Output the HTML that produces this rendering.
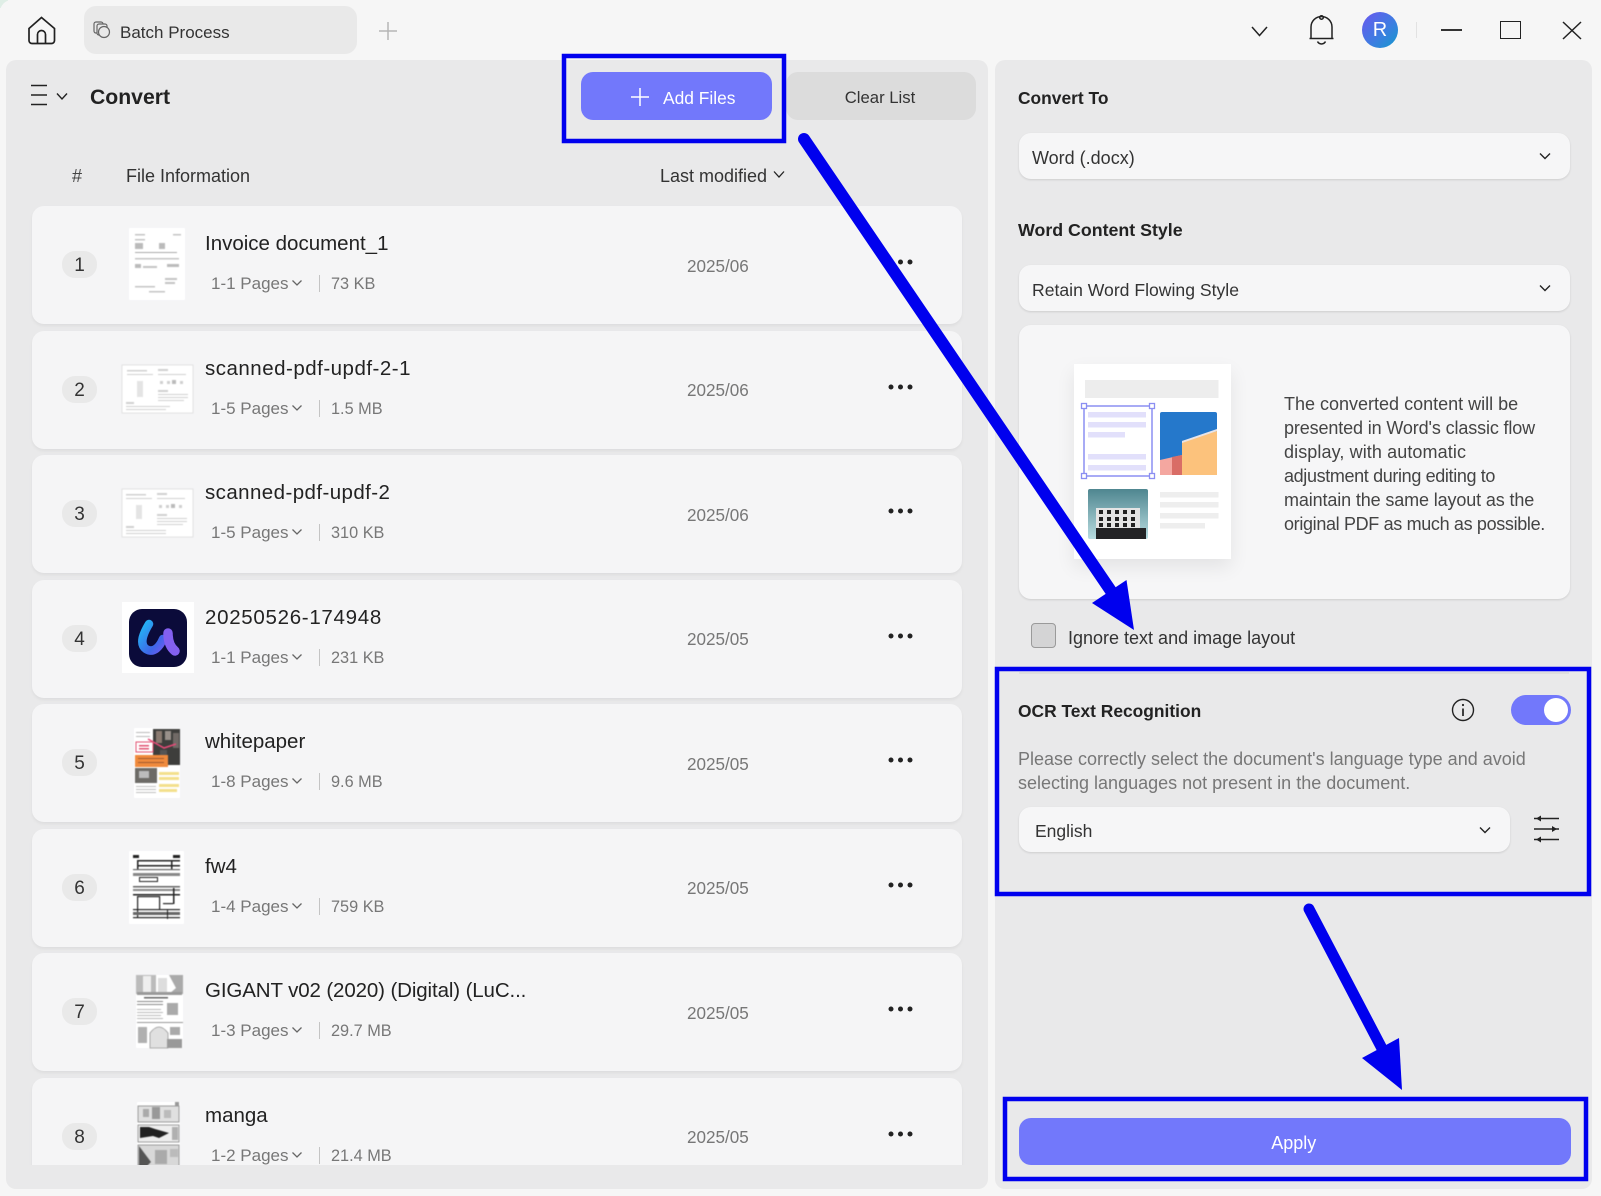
<!DOCTYPE html>
<html>
<head>
<meta charset="utf-8">
<style>
html,body{margin:0;padding:0;}
body{width:1601px;height:1196px;overflow:hidden;background:#f6f6f6;position:relative;font-family:"Liberation Sans",sans-serif;color:#222;}
.a{position:absolute;}
.t{position:absolute;white-space:nowrap;line-height:24px;height:24px;}
.panel{position:absolute;background:#e9e9ea;border-radius:10px;top:60px;height:1129px;}
.dd{position:absolute;background:#f6f6f7;border-radius:12px;box-shadow:0 1px 2px rgba(0,0,0,.12);}
.list{position:absolute;left:0;top:0;width:986px;height:1165px;overflow:hidden;}
.row{position:absolute;left:32px;width:930px;height:118px;background:#f5f5f6;border-radius:12px;box-shadow:0 2px 3px rgba(0,0,0,.05);}
.badge{position:absolute;left:30px;top:45px;width:35px;height:27px;border-radius:13px;background:#e9e9e9;text-align:center;font-size:19px;line-height:29px;color:#333;}
.title{position:absolute;left:173px;top:25px;font-size:20.5px;line-height:26px;color:#222;white-space:nowrap;}
.sub{position:absolute;left:179px;top:66px;font-size:17px;line-height:24px;color:#777;white-space:nowrap;}
.sep{position:absolute;left:287px;top:69px;width:1px;height:17px;background:#c4c4c4;}
.size{position:absolute;left:299px;top:66px;font-size:16.300px;line-height:24px;color:#777;white-space:nowrap;}
.date{position:absolute;left:655px;top:48.500px;font-size:17.100px;line-height:24px;color:#777;}
.chev{position:absolute;left:259px;top:73px;}
.dots{position:absolute;left:856px;top:53px;}
.th{filter:blur(.45px);}
svg{display:block;overflow:visible;}
</style>
</head>
<body>

<!-- window corner -->
<div class="a" style="left:0;top:0;width:8px;height:8px;background:#dfeee6;"></div>
<div class="a" style="left:0;top:0;width:16px;height:16px;background:#f6f6f6;border-radius:12px 0 0 0;"></div>

<!-- top bar -->
<svg class="a" style="left:26px;top:15px" width="32" height="30" viewBox="0 0 32 30" fill="none" stroke="#222" stroke-width="1.700">
<path d="M3 13.500 15.500 2.500 28.500 13.500V25.500A3 3 0 0 1 25.500 28.500H6A3 3 0 0 1 3 25.500Z"/>
<path d="M11.500 28.500V19.500A4 4 0 0 1 19.500 19.500V28.500"/>
</svg>
<div class="a" style="left:84px;top:6px;width:273px;height:48px;background:#e9e9e9;border-radius:12px;"></div>
<svg class="a" style="left:93px;top:21px" width="20" height="18" viewBox="0 0 20 18" fill="none" stroke="#666" stroke-width="1.200">
<rect x="1" y="1" width="9" height="11" rx="2"/><rect x="4" y="3" width="10" height="11" rx="2" fill="#e9e9e9"/><circle cx="11" cy="11" r="5.500" fill="#e9e9e9"/>
</svg>
<div class="t" style="left:120px;top:20.500px;font-size:17px;color:#333;">Batch Process</div>
<svg class="a" style="left:378px;top:21px" width="20" height="20" fill="none" stroke="#b5b5b5" stroke-width="1.500"><path d="M10 1V19M1 10H19"/></svg>

<svg class="a" style="left:1251px;top:25px" width="17" height="12" fill="none" stroke="#222" stroke-width="1.500"><path d="M1 2 8.500 10.500 16 2"/></svg>
<svg class="a" style="left:1308px;top:15px" width="27" height="30" viewBox="0 0 27 30" fill="none" stroke="#222" stroke-width="1.500">
<path d="M3 23V12A10.500 10.500 0 0 1 24 12V23"/><path d="M1.500 23.500H25.500"/><path d="M9.500 26.500A4.500 4.500 0 0 0 17.500 26.500"/><circle cx="13.500" cy="2.500" r="1.800"/>
</svg>
<div class="a" style="left:1362px;top:12px;width:36px;height:36px;border-radius:50%;background:linear-gradient(135deg,#6b57f0,#3a7fe0 60%,#1498cc);color:#fff;text-align:center;font-size:20px;line-height:36px;">R</div>
<div class="a" style="left:1416px;top:22px;width:1px;height:16px;background:#e2e2e2;"></div>
<div class="a" style="left:1441px;top:28.500px;width:21px;height:2px;background:#333;"></div>
<div class="a" style="left:1500px;top:21px;width:19px;height:16px;border:1.700px solid #222;"></div>
<svg class="a" style="left:1562px;top:21px" width="20" height="19" fill="none" stroke="#222" stroke-width="1.500"><path d="M1 1 19 18M19 1 1 18"/></svg>

<!-- left panel -->
<div class="panel" style="left:6px;width:982px;"></div>
<svg class="a" style="left:31px;top:84px" width="17" height="22" fill="none" stroke="#222" stroke-width="1.500"><path d="M0 1.500H16M0 11H16M0 20.500H16"/></svg>
<svg class="a" style="left:56px;top:92px" width="12" height="9" fill="none" stroke="#222" stroke-width="1.400"><path d="M1 1.500 6 7 11 1.500"/></svg>
<div class="t" style="left:90px;top:86px;font-size:21.200px;font-weight:bold;color:#222;">Convert</div>

<div class="a" style="left:581px;top:72px;width:191px;height:48px;border-radius:12px;background:#7278fb;"></div>
<svg class="a" style="left:631px;top:88px" width="18" height="18" fill="none" stroke="#fff" stroke-width="1.500"><path d="M9 0V18M0 9H18"/></svg>
<div class="t" style="left:663px;top:86px;font-size:17.400px;color:#fff;">Add Files</div>
<div class="a" style="left:786px;top:72px;width:190px;height:48px;border-radius:12px;background:#dcdcdc;"></div>
<div class="t" style="left:785px;width:190px;text-align:center;top:86px;font-size:16.700px;color:#333;">Clear List</div>

<div class="t" style="left:72px;top:164px;font-size:18px;color:#444;">#</div>
<div class="t" style="left:126px;top:164px;font-size:18px;color:#333;">File Information</div>
<div class="t" style="left:660px;top:164px;font-size:18px;color:#333;">Last modified</div>
<svg class="a" style="left:773px;top:170px" width="12" height="9" fill="none" stroke="#222" stroke-width="1.300"><path d="M1 1.500 6 7 11 1.500"/></svg>

<div class="list">
<!-- row 1 -->
<div class="row" style="top:206px">
<div class="badge">1</div>
<svg class="a th" style="left:97px;top:22px" width="56" height="72" viewBox="0 0 56 72"><rect width="56" height="72" fill="#fff"/><g fill="#c4c4c4"><rect x="6" y="6" width="10" height="1.500"/><rect x="44" y="6" width="8" height="1.500"/><rect x="6" y="11" width="10" height="1.500"/><rect x="6" y="15" width="8" height="6" fill="#bbb"/><rect x="30" y="15" width="6" height="6" fill="#bbb"/><rect x="6" y="24" width="42" height="1" fill="#aaa"/><rect x="6" y="30" width="44" height="1.500"/><rect x="6" y="36" width="6" height="4" fill="#bbb"/><rect x="14" y="38" width="14" height="2"/><rect x="38" y="36" width="12" height="3" fill="#bbb"/><rect x="36" y="50" width="12" height="2"/><rect x="36" y="54" width="10" height="2"/><rect x="6" y="58" width="20" height="1.500"/><rect x="20" y="63" width="16" height="1.500"/></g></svg>
<div class="title">Invoice document_1</div>
<div class="sub">1-1 Pages</div><svg class="chev" width="12" height="8" fill="none" stroke="#666" stroke-width="1.300"><path d="M1.500 1.500 6 6 10.500 1.500"/></svg><div class="sep"></div><div class="size">73 KB</div>
<div class="date">2025/06</div>
<svg class="dots" width="26" height="6" fill="#222"><circle cx="3" cy="3" r="2.500"/><circle cx="12.500" cy="3" r="2.500"/><circle cx="22" cy="3" r="2.500"/></svg>
</div>
<!-- row 2 -->
<div class="row" style="top:330.500px">
<div class="badge">2</div>
<svg class="a th" style="left:90px;top:34px" width="71" height="48" viewBox="0 0 71 48"><rect width="71" height="48" fill="#fff" stroke="#e2e2e2"/><g fill="#d0d0d0"><rect x="5" y="5" width="20" height="1.500"/><rect x="5" y="9" width="26" height="1"/><rect x="36" y="4" width="10" height="2"/><rect x="36" y="9" width="28" height="1"/><rect x="38" y="16" width="3" height="3"/><rect x="45" y="16" width="3" height="3"/><rect x="50" y="15" width="4" height="4" fill="#bbb"/><rect x="58" y="16" width="3" height="3"/><rect x="36" y="25" width="10" height="2"/><rect x="36" y="29" width="30" height="1"/><rect x="36" y="32" width="30" height="1"/><rect x="36" y="35" width="26" height="1"/><rect x="15" y="16" width="6" height="16" fill="#e4e4e4"/><rect x="4" y="37" width="8" height="2"/><rect x="4" y="41" width="44" height="1"/><rect x="4" y="44" width="40" height="1"/></g></svg>
<div class="title" style="letter-spacing:.5px">scanned-pdf-updf-2-1</div>
<div class="sub">1-5 Pages</div><svg class="chev" width="12" height="8" fill="none" stroke="#666" stroke-width="1.300"><path d="M1.500 1.500 6 6 10.500 1.500"/></svg><div class="sep"></div><div class="size">1.5 MB</div>
<div class="date">2025/06</div>
<svg class="dots" width="26" height="6" fill="#222"><circle cx="3" cy="3" r="2.500"/><circle cx="12.500" cy="3" r="2.500"/><circle cx="22" cy="3" r="2.500"/></svg>
</div>
<!-- row 3 -->
<div class="row" style="top:455px">
<div class="badge">3</div>
<svg class="a th" style="left:90px;top:34px" width="71" height="48" viewBox="0 0 71 48"><rect width="71" height="48" fill="#fff" stroke="#e2e2e2"/><g fill="#d0d0d0"><rect x="4" y="5" width="20" height="1.500"/><rect x="4" y="9" width="26" height="1"/><rect x="35" y="4" width="10" height="2"/><rect x="35" y="9" width="28" height="1"/><rect x="37" y="16" width="3" height="3"/><rect x="44" y="16" width="3" height="3"/><rect x="49" y="15" width="4" height="4" fill="#bbb"/><rect x="57" y="16" width="3" height="3"/><rect x="35" y="25" width="10" height="2"/><rect x="35" y="29" width="30" height="1"/><rect x="35" y="32" width="30" height="1"/><rect x="35" y="35" width="26" height="1"/><rect x="14" y="16" width="6" height="14" fill="#e4e4e4"/><rect x="4" y="37" width="8" height="2"/><rect x="4" y="41" width="40" height="1"/><rect x="4" y="44" width="40" height="1"/></g></svg>
<div class="title" style="letter-spacing:.42px">scanned-pdf-updf-2</div>
<div class="sub">1-5 Pages</div><svg class="chev" width="12" height="8" fill="none" stroke="#666" stroke-width="1.300"><path d="M1.500 1.500 6 6 10.500 1.500"/></svg><div class="sep"></div><div class="size">310 KB</div>
<div class="date">2025/06</div>
<svg class="dots" width="26" height="6" fill="#222"><circle cx="3" cy="3" r="2.500"/><circle cx="12.500" cy="3" r="2.500"/><circle cx="22" cy="3" r="2.500"/></svg>
</div>
<!-- row 4 -->
<div class="row" style="top:579.500px">
<div class="badge">4</div>
<svg class="a" style="left:90px;top:22px" width="72" height="71" viewBox="0 0 72 71">
<defs><linearGradient id="g1" x1="0" y1="0" x2="1" y2="1"><stop offset="0" stop-color="#22b5f5"/><stop offset=".7" stop-color="#3f66e8"/><stop offset="1" stop-color="#6a5cf0"/></linearGradient></defs>
<rect width="72" height="71" fill="#fff"/><rect x="7" y="7" width="58" height="58" rx="13" fill="#0b0b3a"/>
<path d="M27 22C21 32 17 42 24 47C32 52 38 44 41 37" fill="none" stroke="url(#g1)" stroke-width="8.500" stroke-linecap="round"/>
<path d="M46 31C46 39 48 45 53 49" fill="none" stroke="#8360f0" stroke-width="9.500" stroke-linecap="round"/>
</svg>
<div class="title" style="letter-spacing:.7px">20250526-174948</div>
<div class="sub">1-1 Pages</div><svg class="chev" width="12" height="8" fill="none" stroke="#666" stroke-width="1.300"><path d="M1.500 1.500 6 6 10.500 1.500"/></svg><div class="sep"></div><div class="size">231 KB</div>
<div class="date">2025/05</div>
<svg class="dots" width="26" height="6" fill="#222"><circle cx="3" cy="3" r="2.500"/><circle cx="12.500" cy="3" r="2.500"/><circle cx="22" cy="3" r="2.500"/></svg>
</div>
<!-- row 5 -->
<div class="row" style="top:704px">
<div class="badge">5</div>
<svg class="a th" style="left:102px;top:24px" width="46" height="70" viewBox="0 0 46 70"><rect width="46" height="70" fill="#fff"/><rect x="19" y="1" width="27" height="36" fill="#3e3e3c"/><rect x="22" y="3" width="6" height="12" fill="#8a7a70"/><rect x="31" y="3" width="6" height="9" fill="#98908a"/><rect x="39" y="5" width="6" height="15" fill="#706a66"/><rect x="26" y="22" width="7" height="12" fill="#555"/><path d="M14 11 30 20 42 16" fill="none" stroke="#e84a78" stroke-width="1.500"/><rect x="2" y="14" width="17" height="10" fill="none" stroke="#e05070" stroke-width="1"/><rect x="5" y="17" width="10" height="1.500" fill="#e05070"/><rect x="5" y="20" width="10" height="1.500" fill="#e05070"/><rect x="1" y="27" width="33" height="12" fill="#f08a3c"/><rect x="4" y="30" width="26" height="1" fill="#a05a30"/><rect x="4" y="34" width="26" height="1" fill="#a05a30"/><rect x="1" y="40" width="22" height="15" fill="#6c6a66"/><rect x="5" y="43" width="10" height="7" fill="#bbb"/><rect x="25" y="44" width="20" height="3" fill="#f3e08c"/><rect x="25" y="49" width="20" height="3" fill="#f3e08c"/><rect x="25" y="56" width="20" height="3" fill="#f3e08c"/><rect x="25" y="61" width="18" height="3" fill="#f3e08c"/><rect x="2" y="58" width="20" height="1" fill="#c0c0c0"/><rect x="2" y="61" width="20" height="1" fill="#c0c0c0"/><rect x="2" y="64" width="20" height="1" fill="#c0c0c0"/><rect x="2" y="4" width="14" height="1" fill="#bbb"/><rect x="2" y="8" width="14" height="1" fill="#bbb"/></svg>
<div class="title">whitepaper</div>
<div class="sub">1-8 Pages</div><svg class="chev" width="12" height="8" fill="none" stroke="#666" stroke-width="1.300"><path d="M1.500 1.500 6 6 10.500 1.500"/></svg><div class="sep"></div><div class="size">9.6 MB</div>
<div class="date">2025/05</div>
<svg class="dots" width="26" height="6" fill="#222"><circle cx="3" cy="3" r="2.500"/><circle cx="12.500" cy="3" r="2.500"/><circle cx="22" cy="3" r="2.500"/></svg>
</div>
<!-- row 6 -->
<div class="row" style="top:828.500px">
<div class="badge">6</div>
<svg class="a th" style="left:97px;top:22px" width="55" height="73" viewBox="0 0 55 73"><rect width="55" height="73" fill="#fff"/><g fill="#222"><rect x="4" y="4" width="6" height="3"/><rect x="44" y="4" width="7" height="3"/><rect x="8" y="9" width="43" height="1.500"/><rect x="8" y="14" width="43" height="1.500"/><rect x="8" y="9" width="1.500" height="9"/><rect x="42" y="9" width="1.500" height="9"/><rect x="4" y="18" width="47" height="1.200" fill="#666"/><rect x="4" y="22" width="47" height="3" fill="#888"/><rect x="10" y="26" width="19" height="1"/><rect x="10" y="30" width="19" height="1"/><rect x="10" y="26" width="1" height="5"/><rect x="28" y="26" width="1" height="5"/><rect x="4" y="35" width="47" height="1.500" fill="#666"/><rect x="4" y="38" width="47" height="2" fill="#888"/><rect x="4" y="43" width="47" height="1.500"/><rect x="8" y="45" width="23" height="1.200"/><rect x="8" y="45" width="1.200" height="22"/><rect x="30" y="45" width="1.200" height="13"/><rect x="44" y="37" width="1.500" height="16"/><rect x="34" y="52" width="10" height="1.200"/><rect x="4" y="58" width="47" height="1.200"/><rect x="4" y="61" width="47" height="3" fill="#666"/><rect x="4" y="66" width="47" height="1.200"/><rect x="38" y="59" width="1" height="9"/></g></svg>
<div class="title">fw4</div>
<div class="sub">1-4 Pages</div><svg class="chev" width="12" height="8" fill="none" stroke="#666" stroke-width="1.300"><path d="M1.500 1.500 6 6 10.500 1.500"/></svg><div class="sep"></div><div class="size">759 KB</div>
<div class="date">2025/05</div>
<svg class="dots" width="26" height="6" fill="#222"><circle cx="3" cy="3" r="2.500"/><circle cx="12.500" cy="3" r="2.500"/><circle cx="22" cy="3" r="2.500"/></svg>
</div>
<!-- row 7 -->
<div class="row" style="top:953px">
<div class="badge">7</div>
<svg class="a th" style="left:104px;top:22px" width="47" height="73" viewBox="0 0 47 73"><rect width="47" height="73" fill="#fff"/>
<rect x="0" y="0" width="20" height="19" fill="#bbb"/><rect x="7" y="1" width="8" height="17" fill="#eee"/><rect x="22" y="3" width="9" height="15" fill="#ddd"/><path d="M33 0H47V19H33L40 13Z" fill="#aaa"/><rect x="1" y="17" width="45" height="3" fill="#999"/>
<rect x="8" y="22" width="24" height="1.500" fill="#666"/><rect x="1" y="26" width="26" height="1" fill="#888"/><rect x="1" y="29" width="26" height="1" fill="#888"/>
<rect x="1" y="34" width="24" height="1" fill="#bbb"/><rect x="1" y="37" width="26" height="1" fill="#bbb"/><rect x="1" y="40" width="24" height="1" fill="#bbb"/><rect x="1" y="43" width="26" height="1" fill="#bbb"/>
<rect x="31" y="28" width="11" height="12" fill="#aaa"/><rect x="1" y="47" width="46" height="1" fill="#999"/>
<rect x="2" y="52" width="9" height="16" fill="#b0b0b0"/><path d="M14 73V58Q23 46 32 58V73Z" fill="#e0e0e0" stroke="#999" stroke-width=".8"/><rect x="34" y="52" width="10" height="8" fill="#aaa"/><rect x="31" y="64" width="15" height="9" fill="#999"/></svg>
<div class="title" style="letter-spacing:-.12px">GIGANT v02 (2020) (Digital) (LuC...</div>
<div class="sub">1-3 Pages</div><svg class="chev" width="12" height="8" fill="none" stroke="#666" stroke-width="1.300"><path d="M1.500 1.500 6 6 10.500 1.500"/></svg><div class="sep"></div><div class="size">29.7 MB</div>
<div class="date">2025/05</div>
<svg class="dots" width="26" height="6" fill="#222"><circle cx="3" cy="3" r="2.500"/><circle cx="12.500" cy="3" r="2.500"/><circle cx="22" cy="3" r="2.500"/></svg>
</div>
<!-- row 8 -->
<div class="row" style="top:1077.500px">
<div class="badge">8</div>
<svg class="a th" style="left:105px;top:24px" width="43" height="66" viewBox="0 0 43 66"><rect width="43" height="66" fill="#fff"/>
<rect x="1" y="4" width="41" height="16" fill="#e0e0e0" stroke="#888" stroke-width=".8"/><rect x="6" y="7" width="6" height="8" fill="#aaa"/><rect x="15" y="5" width="8" height="12" fill="#999"/><rect x="27" y="8" width="7" height="8" fill="#bbb"/><rect x="38" y="0" width="4" height="4" fill="#999"/>
<rect x="1" y="23" width="41" height="17" fill="#eee" stroke="#888" stroke-width=".8"/><path d="M3 25H12L18 27 32 31 22 36 16 34 3 36Z" fill="#222"/><rect x="35" y="25" width="6" height="13" fill="#b0b0b0"/>
<rect x="1" y="43" width="41" height="23" fill="#d8d8d8" stroke="#888" stroke-width=".8"/><path d="M2 44 14 60 8 66H2Z" fill="#555"/><rect x="18" y="48" width="12" height="14" fill="#aaa"/><rect x="33" y="47" width="8" height="8" fill="#bbb"/></svg>
<div class="title">manga</div>
<div class="sub">1-2 Pages</div><svg class="chev" width="12" height="8" fill="none" stroke="#666" stroke-width="1.300"><path d="M1.500 1.500 6 6 10.500 1.500"/></svg><div class="sep"></div><div class="size">21.4 MB</div>
<div class="date">2025/05</div>
<svg class="dots" width="26" height="6" fill="#222"><circle cx="3" cy="3" r="2.500"/><circle cx="12.500" cy="3" r="2.500"/><circle cx="22" cy="3" r="2.500"/></svg>
</div>
</div>

<!-- right panel -->
<div class="panel" style="left:995px;width:597px;"></div>
<div class="t" style="left:1018px;top:86px;font-size:17.400px;font-weight:bold;color:#222;">Convert To</div>
<div class="dd" style="left:1019px;top:133px;width:551px;height:46px;"></div>
<div class="t" style="left:1032px;top:146px;font-size:18px;color:#333;">Word (.docx)</div>
<svg class="a" style="left:1539px;top:152px" width="12" height="8" fill="none" stroke="#222" stroke-width="1.400"><path d="M1 1.500 6 6.500 11 1.500"/></svg>
<div class="t" style="left:1018px;top:218px;font-size:17.800px;font-weight:bold;color:#222;">Word Content Style</div>
<div class="dd" style="left:1019px;top:265px;width:551px;height:46px;"></div>
<div class="t" style="left:1032px;top:278px;font-size:17.600px;color:#333;">Retain Word Flowing Style</div>
<svg class="a" style="left:1539px;top:284px" width="12" height="8" fill="none" stroke="#222" stroke-width="1.400"><path d="M1 1.500 6 6.500 11 1.500"/></svg>

<div class="dd" style="left:1019px;top:325px;width:551px;height:274px;"></div>
<!-- illustration -->
<div class="a" style="left:1074px;top:364px;width:157px;height:195px;background:#fff;box-shadow:0 8px 18px rgba(0,0,0,.08);"></div>
<svg class="a" style="left:1075px;top:364px" width="156" height="195" viewBox="1075 364 156 195">
<defs>
<linearGradient id="bd" x1="0" y1="0" x2="0" y2="1"><stop offset="0" stop-color="#4f8690"/><stop offset="1" stop-color="#b8dce0"/></linearGradient>
</defs>
<rect x="1085" y="380" width="133.500" height="18" fill="#ededed"/>
<g fill="#e2e0fb"><rect x="1088" y="412" width="58" height="5.500"/><rect x="1088" y="422" width="58" height="5.500"/><rect x="1088" y="432" width="37" height="5.500"/><rect x="1088" y="454" width="58" height="5.500"/><rect x="1088" y="465" width="58" height="5.500"/></g>
<rect x="1084" y="406" width="68" height="70" fill="none" stroke="#8b8ff2" stroke-width="1.500"/>
<g fill="#fff" stroke="#8b8ff2" stroke-width="1.300"><rect x="1081.500" y="403.500" width="5" height="5"/><rect x="1149.500" y="403.500" width="5" height="5"/><rect x="1081.500" y="473.500" width="5" height="5"/><rect x="1149.500" y="473.500" width="5" height="5"/></g>
<rect x="1160" y="412" width="57" height="63" rx="2" fill="#2578cb"/>
<path d="M1160 462 1182 455 1182 441 1217 431V475H1160Z" fill="#fcc27c"/>
<path d="M1182 441 1217 429V431L1182 443Z" fill="#e8e4e8"/>
<path d="M1160 460 1182 455V475H1160Z" fill="#f4a7a0"/>
<path d="M1172 457 1182 455V475H1172Z" fill="#d96d66"/>
<rect x="1088" y="489" width="60" height="50" rx="2" fill="url(#bd)"/>
<rect x="1096" y="508" width="44" height="20" fill="#e4e4e4"/>
<rect x="1096" y="528" width="50" height="11" fill="#232325"/>
<g fill="#222"><rect x="1099" y="510" width="4" height="4"/><rect x="1107" y="510" width="4" height="4"/><rect x="1115" y="510" width="4" height="4"/><rect x="1123" y="510" width="4" height="4"/><rect x="1131" y="510" width="4" height="4"/><rect x="1099" y="517" width="4" height="4"/><rect x="1107" y="517" width="4" height="4"/><rect x="1115" y="517" width="4" height="4"/><rect x="1123" y="517" width="4" height="4"/><rect x="1131" y="517" width="4" height="4"/><rect x="1099" y="523" width="4" height="4"/><rect x="1107" y="523" width="4" height="4"/><rect x="1115" y="523" width="4" height="4"/><rect x="1123" y="523" width="4" height="4"/><rect x="1131" y="523" width="4" height="4"/></g>
<g fill="#eeeeee"><rect x="1160" y="492" width="58.500" height="5.500"/><rect x="1160" y="502" width="58.500" height="5.500"/><rect x="1160" y="513" width="58.500" height="5.500"/><rect x="1160" y="523" width="45" height="5.500"/></g>
</svg>
<div class="a" style="left:1284px;top:392px;font-size:18px;line-height:24px;color:#444;white-space:nowrap;">The converted content will be<br><span style="letter-spacing:-.13px">presented in Word's classic flow</span><br><span style="letter-spacing:.1px">display, with automatic</span><br><span style="letter-spacing:-.36px">adjustment during editing to</span><br><span style="letter-spacing:-.13px">maintain the same layout as the</span><br><span style="letter-spacing:-.34px">original PDF as much as possible.</span></div>

<div class="a" style="left:1031px;top:623px;width:23px;height:23px;border:1px solid #9a9a9a;border-radius:4px;background:#d4d4d5;"></div>
<div class="t" style="left:1068px;top:626px;font-size:18px;color:#333;">Ignore text and image layout</div>

<div class="a" style="left:1019px;top:672px;width:550px;height:2px;background:#dedede;"></div>
<div class="t" style="left:1018px;top:699px;font-size:17.400px;font-weight:bold;color:#222;">OCR Text Recognition</div>
<svg class="a" style="left:1451px;top:698px" width="24" height="24" fill="none" stroke="#222" stroke-width="1.400"><circle cx="12" cy="12" r="10.500"/><path d="M12 10.500V18" stroke-width="1.700"/><circle cx="12" cy="7" r="1.100" fill="#222" stroke="none"/></svg>
<div class="a" style="left:1511px;top:695px;width:59.500px;height:30px;border-radius:15px;background:#7278fb;"></div>
<div class="a" style="left:1544px;top:698px;width:24px;height:24px;border-radius:50%;background:#fff;"></div>
<div class="a" style="left:1018px;top:747px;font-size:18px;line-height:24px;color:#777;white-space:nowrap;">Please correctly select the document's language type and avoid<br>selecting languages not present in the document.</div>
<div class="dd" style="left:1019px;top:807px;width:490.500px;height:45px;"></div>
<div class="t" style="left:1035px;top:819px;font-size:17.500px;color:#333;">English</div>
<svg class="a" style="left:1479px;top:826px" width="12" height="8" fill="none" stroke="#222" stroke-width="1.400"><path d="M1 1.500 6 6.500 11 1.500"/></svg>
<svg class="a" style="left:1534px;top:815px" width="26" height="28" fill="#222" stroke="#222" stroke-width="1.500"><path d="M0 3.500H25M0 14H25M0 24.500H25"/><path d="M7 .5V6.500L2 3.500ZM18 11V17L23 14ZM7 21.500V27.500L2 24.500Z" stroke="none"/></svg>

<div class="a" style="left:1019px;top:1118px;width:551.500px;height:47px;border-radius:12px;background:#7278fb;"></div>
<div class="t" style="left:1018px;width:551.500px;text-align:center;top:1131px;font-size:18px;color:#fff;">Apply</div>

<!-- annotations -->
<svg class="a" style="left:0;top:0" width="1601" height="1196" fill="none">
<g stroke="#0000ee" stroke-width="4.500">
<rect x="564" y="56" width="220" height="85"/>
<rect x="997" y="669" width="592" height="225"/>
<rect x="1005" y="1099" width="581" height="80"/>
</g>
<path d="M804 139 1113 594" stroke="#0000ee" stroke-width="12" stroke-linecap="round"/>
<path d="M1134 630 1126.500 580 1092 603Z" fill="#0000ee"/>
<path d="M1309 909 1388 1060" stroke="#0000ee" stroke-width="11" stroke-linecap="round"/>
<path d="M1402 1090 1399 1038 1362 1058Z" fill="#0000ee"/>
</svg>
</body>
</html>
